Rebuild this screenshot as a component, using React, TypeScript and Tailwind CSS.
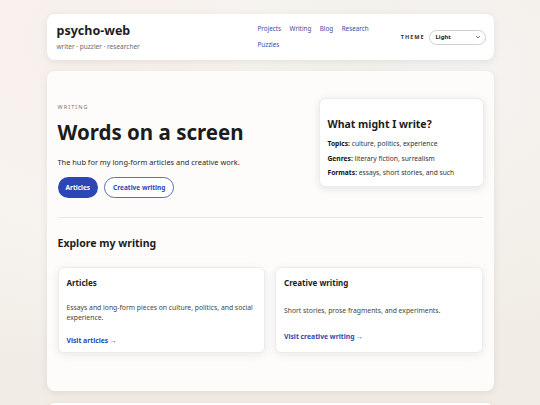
import React from "react";

const navLinks = ["Projects", "Writing", "Blog", "Research", "Puzzles"];

const facts = [
  { label: "Topics:", text: "culture, politics, experience" },
  { label: "Genres:", text: "literary fiction, surrealism" },
  { label: "Formats:", text: "essays, short stories, and such" },
];

const cards = [
  {
    title: "Articles",
    text: "Essays and long-form pieces on culture, politics, and social experience.",
    link: "Visit articles →",
    textGap: "mt-[14px]",
    linkGap: "mt-[13px]",
  },
  {
    title: "Creative writing",
    text: "Short stories, prose fragments, and experiments.",
    link: "Visit creative writing →",
    textGap: "mt-[17px]",
    linkGap: "mt-[16px]",
  },
];

const Header: React.FC = () => (
  <header className="flex items-center rounded-[8px] bg-white pl-[10px] pr-[8px] h-[46px] shadow-[0_2px_8px_rgba(0,0,0,0.08)]">
    <div className="w-[201px]">
      <div className="text-[12.5px] font-bold leading-[16px] text-[#1d1d1d]">psycho-web</div>
      <div className="mt-[3px] text-[6.5px] leading-[10px] text-[#6b6b6b]">writer · puzzler · researcher</div>
    </div>
    <nav className="flex w-[118px] flex-wrap gap-x-[8.5px] gap-y-[6px] text-[6.3px] leading-[10px] text-[#3b4c9c]">
      {navLinks.map((l) => (
        <a key={l}>{l}</a>
      ))}
    </nav>
    <div className="ml-auto flex items-center gap-[4px]">
      <span className="text-[5.5px] font-bold tracking-[0.18em] text-[#333]">THEME</span>
      <div className="flex h-[15px] w-[57px] items-center justify-between rounded-full border border-[#cfcfcf] bg-white pl-[6px] pr-[4px]">
        <span className="text-[6px] font-bold text-[#222]">Light</span>
        <svg width="6" height="6" viewBox="0 0 10 10">
          <path d="M2 3.5 L5 6.5 L8 3.5" fill="none" stroke="#444" strokeWidth="1.4" />
        </svg>
      </div>
    </div>
  </header>
);

export default function App() {
  return (
    <div
      className="h-[405px] overflow-hidden bg-[#f1ede6] bg-[radial-gradient(circle_at_15%_10%,#f8efec_0,#f7f3ef_30%,transparent_55%),radial-gradient(circle_at_85%_20%,#f6f4f1_0,transparent_45%)] pt-[14px]"
      style={{ fontFamily: '"Noto Sans", "Open Sans", sans-serif' }}
    >
      <div className="mx-auto w-[447px]">
        <Header />

        <main className="mt-[11px] h-[320px] rounded-[8px] bg-[#fdfcfb] px-[11px] pt-[27px] shadow-[0_2px_8px_rgba(0,0,0,0.08)]">
          <div className="flex">
            <div className="flex-1 pt-[5px]">
              <div className="text-[5.5px] tracking-[0.2em] text-[#777] leading-[8px]">WRITING</div>
              <h1 className="mt-[7px] text-[20.5px] font-bold leading-[28px] text-[#1c1c1c]">Words on a screen</h1>
              <p className="mt-[11px] text-[7.4px] leading-[11px] text-[#2a2a2a]">
                The hub for my long-form articles and creative work.
              </p>
              <div className="mt-[9px] flex gap-[6px]">
                <button className="h-[21px] rounded-full bg-[#2c47b5] px-[8px] text-[6.5px] font-bold text-white">
                  Articles
                </button>
                <button className="h-[21px] rounded-full border border-[#5b6cb8] bg-white px-[8px] text-[6.5px] font-bold text-[#2c47b5]">
                  Creative writing
                </button>
              </div>
            </div>
            <aside className="mr-[-1px] h-[89px] w-[165px] rounded-[7px] border border-[#ececec] bg-white px-[8px] pt-[18px] shadow-[0_2px_8px_rgba(0,0,0,0.1)]">
              <h2 className="text-[10.5px] font-bold leading-[14px] text-[#1d1d1d]">What might I write?</h2>
              <div className="mt-[8px] flex flex-col gap-[4.5px] text-[6.7px] leading-[10px] text-[#333]">
                {facts.map((f) => (
                  <div key={f.label}>
                    <span className="font-bold text-[#111]">{f.label}</span> {f.text}
                  </div>
                ))}
              </div>
            </aside>
          </div>

          <div className="mt-[19px] h-px bg-[#ebe8e4]" />

          <h2 className="mt-[18px] text-[10.5px] font-bold leading-[14px] text-[#1d1d1d]">Explore my writing</h2>

          <div className="mt-[17px] grid grid-cols-2 gap-[10px]">
            {cards.map((c) => (
              <div
                key={c.title}
                className="h-[86px] rounded-[6px] border border-[#ececec] bg-white px-[8px] pt-[9px] shadow-[0_2px_8px_rgba(0,0,0,0.08)]"
              >
                <h3 className="text-[8px] font-bold leading-[12px] text-[#1d1d1d]">{c.title}</h3>
                <p className={`${c.textGap} text-[6.8px] leading-[10px] text-[#444]`}>{c.text}</p>
                <a className={`${c.linkGap} block text-[6.8px] font-bold leading-[10px] text-[#2c47b5]`}>{c.link}</a>
              </div>
            ))}
          </div>
        </main>

        <div className="mt-[12px] h-[40px] rounded-[8px] bg-white shadow-[0_2px_8px_rgba(0,0,0,0.08)]" />
      </div>
    </div>
  );
}
